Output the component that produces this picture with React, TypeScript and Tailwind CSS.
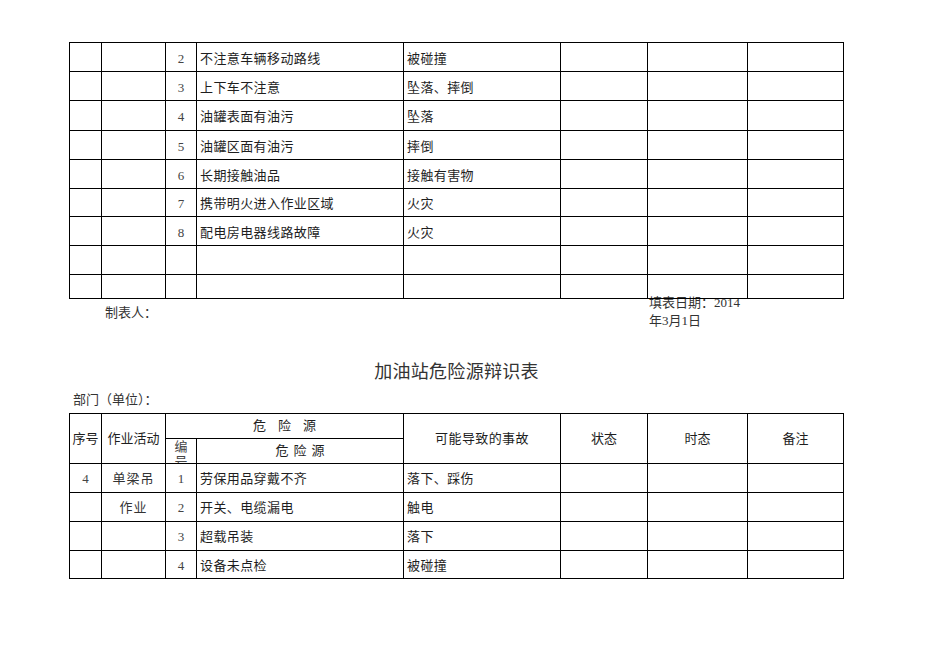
import React from "react";

const COLS = "grid grid-cols-[32px_64px_31px_207px_157px_87px_100px_96px]";
const cell = "border-r border-b border-black flex items-center";

const top: [string, string, string, string][] = [
  ["2", "不注意车辆移动路线", "被碰撞", "h-[29px]"],
  ["3", "上下车不注意", "坠落、摔倒", "h-[29px]"],
  ["4", "油罐表面有油污", "坠落", "h-[30px]"],
  ["5", "油罐区面有油污", "摔倒", "h-[29px]"],
  ["6", "长期接触油品", "接触有害物", "h-[29px]"],
  ["7", "携带明火进入作业区域", "火灾", "h-[28px]"],
  ["8", "配电房电器线路故障", "火灾", "h-[29px]"],
  ["", "", "", "h-[29px]"],
  ["", "", "", "h-[24px]"],
];

const bottom: [string, string, string, string, string][] = [
  ["4", "单梁吊", "1", "劳保用品穿戴不齐", "落下、踩伤"],
  ["", "作业", "2", "开关、电缆漏电", "触电"],
  ["", "", "3", "超载吊装", "落下"],
  ["", "", "4", "设备未点检", "被碰撞"],
];

export default function App() {
  return (
    <div className="w-[950px] h-[672px] bg-white pl-[69px] pt-[42px] text-[13px] text-[#1e1e1e] font-['Liberation_Serif','Noto_Sans_CJK_SC',serif] overflow-hidden">
      {/* Table 1 */}
      <div className="relative z-10 w-[775px] border-l border-t border-black">
        {top.map(([n, h, a, hc], i) => (
          <div key={i} className={`${COLS} ${hc}`}>
            <div className={cell} />
            <div className={cell} />
            <div className={`${cell} justify-center pt-[3px] text-[#444]`}>{n}</div>
            <div className={`${cell} pl-[3px] pt-[3px] tracking-[0.4px]`}>{h}</div>
            <div className={`${cell} pl-[3px] pt-[3px] tracking-[0.4px]`}>{a}</div>
            <div className={cell} />
            <div className={cell} />
            <div className={cell} />
          </div>
        ))}
      </div>

      {/* Footer */}
      <div className="grid grid-cols-[580px_100px] items-start w-[775px]">
        <div className="pl-[36px] mt-[5px] leading-[18px] text-[#333]">制表人：</div>
        <div className="-mt-[5px] w-[98px] leading-[18px] text-[#333]">
          填表日期：2014年3月1日
        </div>
      </div>

      {/* Title */}
      <div className="w-[775px] mt-[30px] text-center text-[18px] leading-[24px] text-[#333] tracking-[0.3px]">
        加油站危险源辩识表
      </div>

      <div className="mt-[7px] ml-[4px] leading-[18px] text-[#333]">部门（单位）：</div>

      {/* Table 2 */}
      <div className={`${COLS} grid-rows-[25px_25px_29px_29px_29px_28px] mt-[4px] w-[775px] border-l border-t border-black`}>
        <div className={`${cell} row-span-2 justify-center`}>序号</div>
        <div className={`${cell} row-span-2 justify-center`}>作业活动</div>
        <div className={`${cell} col-span-2 justify-center tracking-[12px] pl-[12px]`}>危险源</div>
        <div className={`${cell} row-span-2 justify-center tracking-[0.4px]`}>可能导致的事故</div>
        <div className={`${cell} row-span-2 justify-center`}>状态</div>
        <div className={`${cell} row-span-2 justify-center`}>时态</div>
        <div className={`${cell} row-span-2 justify-center`}>备注</div>
        <div className="border-r border-b border-black flex flex-col items-center overflow-hidden text-[13px] leading-[15px] text-[#444]">
          <span>编</span>
          <span>号</span>
        </div>
        <div className={`${cell} justify-center tracking-[5px] pl-[5px]`}>危险源</div>
        {bottom.map(([s, act, n, h, a], i) => (
          <React.Fragment key={i}>
            <div className={`${cell} justify-center pt-[2px] text-[#444]`}>{s}</div>
            <div className={`${cell} justify-center pt-[2px] text-[#333] tracking-[1px]`}>{act}</div>
            <div className={`${cell} justify-center pt-[2px] text-[#444]`}>{n}</div>
            <div className={`${cell} pl-[3px] pt-[2px] tracking-[0.4px]`}>{h}</div>
            <div className={`${cell} pl-[3px] pt-[2px] tracking-[0.4px]`}>{a}</div>
            <div className={cell} />
            <div className={cell} />
            <div className={cell} />
          </React.Fragment>
        ))}
      </div>
    </div>
  );
}
